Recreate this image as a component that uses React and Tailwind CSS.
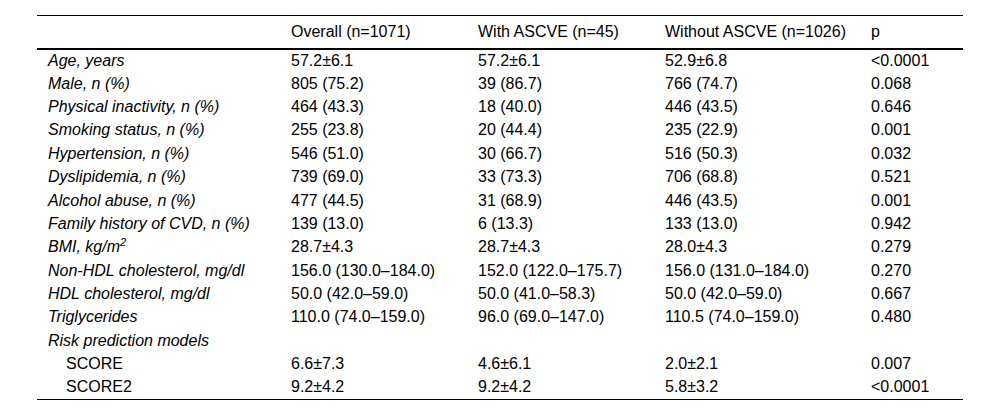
import React from "react";

const rows = [
  ["Age, years", "57.2±6.1", "57.2±6.1", "52.9±6.8", "<0.0001"],
  ["Male, n (%)", "805 (75.2)", "39 (86.7)", "766 (74.7)", "0.068"],
  ["Physical inactivity, n (%)", "464 (43.3)", "18 (40.0)", "446 (43.5)", "0.646"],
  ["Smoking status, n (%)", "255 (23.8)", "20 (44.4)", "235 (22.9)", "0.001"],
  ["Hypertension, n (%)", "546 (51.0)", "30 (66.7)", "516 (50.3)", "0.032"],
  ["Dyslipidemia, n (%)", "739 (69.0)", "33 (73.3)", "706 (68.8)", "0.521"],
  ["Alcohol abuse, n (%)", "477 (44.5)", "31 (68.9)", "446 (43.5)", "0.001"],
  ["Family history of CVD, n (%)", "139 (13.0)", "6 (13.3)", "133 (13.0)", "0.942"],
  ["BMI", "28.7±4.3", "28.7±4.3", "28.0±4.3", "0.279"],
  ["Non-HDL cholesterol, mg/dl", "156.0 (130.0–184.0)", "152.0 (122.0–175.7)", "156.0 (131.0–184.0)", "0.270"],
  ["HDL cholesterol, mg/dl", "50.0 (42.0–59.0)", "50.0 (41.0–58.3)", "50.0 (42.0–59.0)", "0.667"],
  ["Triglycerides", "110.0 (74.0–159.0)", "96.0 (69.0–147.0)", "110.5 (74.0–159.0)", "0.480"],
  ["Risk prediction models", "", "", "", ""],
  ["SCORE", "6.6±7.3", "4.6±6.1", "2.0±2.1", "0.007"],
  ["SCORE2", "9.2±4.2", "9.2±4.2", "5.8±3.2", "<0.0001"],
];

export default function App() {
  return (
    <div
      className="w-[1000px] h-[417px] bg-white text-black"
      style={{ fontFamily: '"Liberation Sans", Arial, sans-serif' }}
    >
      <div className="pt-[15px] pl-[37px]">
        <table className="w-[926px] border-collapse text-[16px] leading-none table-fixed">
          <colgroup>
            <col className="w-[243px]" />
            <col className="w-[187px]" />
            <col className="w-[187px]" />
            <col className="w-[206px]" />
            <col className="w-[103px]" />
          </colgroup>
          <thead>
            <tr className="h-[33px] border-t border-black border-b-2">
              <th className="pl-[11px] text-left font-normal"></th>
              <th className="pl-[11px] text-left font-normal">Overall (n=1071)</th>
              <th className="pl-[11px] text-left font-normal">With ASCVE (n=45)</th>
              <th className="pl-[11px] text-left font-normal">Without ASCVE (n=1026)</th>
              <th className="pl-[11px] text-left font-normal">p</th>
            </tr>
          </thead>
          <tbody className="border-b border-black">
            {rows.map((r, i) => {
              const sub = r[0] === "SCORE" || r[0] === "SCORE2";
              return (
                <tr key={i} className="h-[23.4px]">
                  <td className={sub ? "pl-[29px] not-italic" : "pl-[11px] italic"}>
                    {r[0] === "BMI" ? (
                      <>
                        BMI, kg/m<sup className="text-[11px] -top-[6px]">2</sup>
                      </>
                    ) : (
                      r[0]
                    )}
                  </td>
                  <td className="pl-[11px]">{r[1]}</td>
                  <td className="pl-[11px]">{r[2]}</td>
                  <td className="pl-[11px]">{r[3]}</td>
                  <td className="pl-[11px]">{r[4]}</td>
                </tr>
              );
            })}
          </tbody>
        </table>
      </div>
    </div>
  );
}
